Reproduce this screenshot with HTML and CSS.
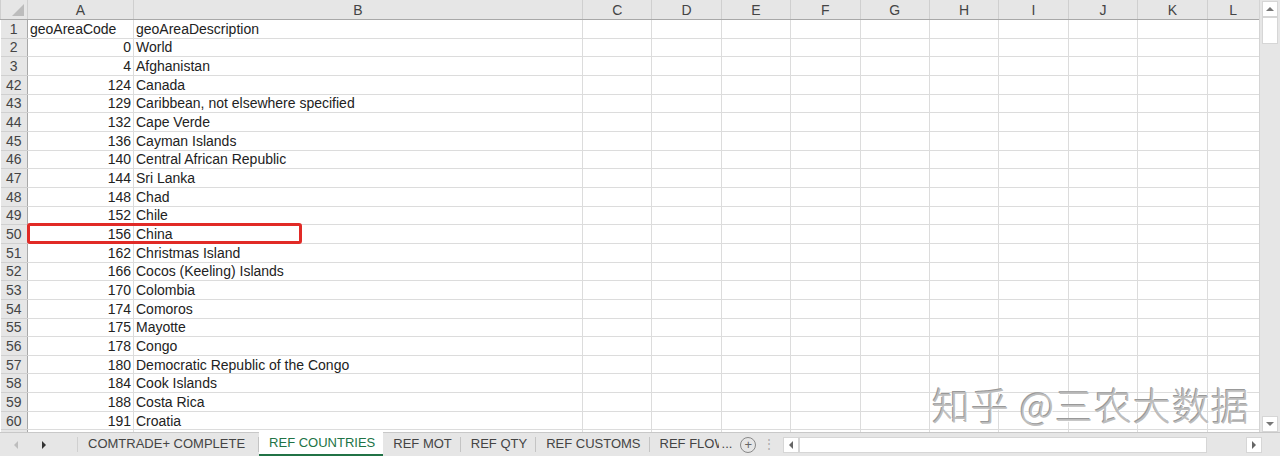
FILE: index.html
```html
<!DOCTYPE html>
<html lang="en">
<head>
    <meta charset="UTF-8">
    <title>REF COUNTRIES</title>
    <link rel="stylesheet" href="styles.css">
</head>
<body>
    <div class="window">
        <!-- Sheet area + vertical scrollbar -->
        <div class="workarea">
            <div class="grid-wrap">
                <table class="sheet">
                    <colgroup>
                        <col class="c-row"><col class="c-a"><col class="c-b">
                        <col class="c-n"><col class="c-n"><col class="c-n"><col class="c-n"><col class="c-n">
                        <col class="c-n"><col class="c-n"><col class="c-n"><col class="c-n"><col class="c-l">
                    </colgroup>
                    <thead>
                        <tr>
                            <th class="corner"><span class="corner-tri"></span></th>
                            <th>A</th><th>B</th><th>C</th><th>D</th><th>E</th><th>F</th>
                            <th>G</th><th>H</th><th>I</th><th>J</th><th>K</th><th>L</th>
                        </tr>
                    </thead>
                    <tbody>
                        <tr><th>1</th><td>geoAreaCode</td><td class="desc">geoAreaDescription</td><td></td><td></td><td></td><td></td><td></td><td></td><td></td><td></td><td></td><td></td></tr>
                        <tr><th>2</th><td class="num">0</td><td class="desc">World</td><td></td><td></td><td></td><td></td><td></td><td></td><td></td><td></td><td></td><td></td></tr>
                        <tr><th>3</th><td class="num">4</td><td class="desc">Afghanistan</td><td></td><td></td><td></td><td></td><td></td><td></td><td></td><td></td><td></td><td></td></tr>
                        <tr><th>42</th><td class="num">124</td><td class="desc">Canada</td><td></td><td></td><td></td><td></td><td></td><td></td><td></td><td></td><td></td><td></td></tr>
                        <tr><th>43</th><td class="num">129</td><td class="desc">Caribbean, not elsewhere specified</td><td></td><td></td><td></td><td></td><td></td><td></td><td></td><td></td><td></td><td></td></tr>
                        <tr><th>44</th><td class="num">132</td><td class="desc">Cape Verde</td><td></td><td></td><td></td><td></td><td></td><td></td><td></td><td></td><td></td><td></td></tr>
                        <tr><th>45</th><td class="num">136</td><td class="desc">Cayman Islands</td><td></td><td></td><td></td><td></td><td></td><td></td><td></td><td></td><td></td><td></td></tr>
                        <tr><th>46</th><td class="num">140</td><td class="desc">Central African Republic</td><td></td><td></td><td></td><td></td><td></td><td></td><td></td><td></td><td></td><td></td></tr>
                        <tr><th>47</th><td class="num">144</td><td class="desc">Sri Lanka</td><td></td><td></td><td></td><td></td><td></td><td></td><td></td><td></td><td></td><td></td></tr>
                        <tr><th>48</th><td class="num">148</td><td class="desc">Chad</td><td></td><td></td><td></td><td></td><td></td><td></td><td></td><td></td><td></td><td></td></tr>
                        <tr><th>49</th><td class="num">152</td><td class="desc">Chile</td><td></td><td></td><td></td><td></td><td></td><td></td><td></td><td></td><td></td><td></td></tr>
                        <tr><th>50</th><td class="num">156</td><td class="desc">China</td><td></td><td></td><td></td><td></td><td></td><td></td><td></td><td></td><td></td><td></td></tr>
                        <tr><th>51</th><td class="num">162</td><td class="desc">Christmas Island</td><td></td><td></td><td></td><td></td><td></td><td></td><td></td><td></td><td></td><td></td></tr>
                        <tr><th>52</th><td class="num">166</td><td class="desc">Cocos (Keeling) Islands</td><td></td><td></td><td></td><td></td><td></td><td></td><td></td><td></td><td></td><td></td></tr>
                        <tr><th>53</th><td class="num">170</td><td class="desc">Colombia</td><td></td><td></td><td></td><td></td><td></td><td></td><td></td><td></td><td></td><td></td></tr>
                        <tr><th>54</th><td class="num">174</td><td class="desc">Comoros</td><td></td><td></td><td></td><td></td><td></td><td></td><td></td><td></td><td></td><td></td></tr>
                        <tr><th>55</th><td class="num">175</td><td class="desc">Mayotte</td><td></td><td></td><td></td><td></td><td></td><td></td><td></td><td></td><td></td><td></td></tr>
                        <tr><th>56</th><td class="num">178</td><td class="desc">Congo</td><td></td><td></td><td></td><td></td><td></td><td></td><td></td><td></td><td></td><td></td></tr>
                        <tr><th>57</th><td class="num">180</td><td class="desc">Democratic Republic of the Congo</td><td></td><td></td><td></td><td></td><td></td><td></td><td></td><td></td><td></td><td></td></tr>
                        <tr><th>58</th><td class="num">184</td><td class="desc">Cook Islands</td><td></td><td></td><td></td><td></td><td></td><td></td><td></td><td></td><td></td><td></td></tr>
                        <tr><th>59</th><td class="num">188</td><td class="desc">Costa Rica</td><td></td><td></td><td></td><td></td><td></td><td></td><td></td><td></td><td></td><td></td></tr>
                        <tr><th>60</th><td class="num">191</td><td class="desc">Croatia</td><td></td><td></td><td></td><td></td><td></td><td></td><td></td><td></td><td></td><td></td></tr>
                        <tr class="cut"><th></th><td></td><td></td><td></td><td></td><td></td><td></td><td></td><td></td><td></td><td></td><td></td><td></td></tr>
                    </tbody>
                </table>

                <!-- overlays -->
                <div class="highlight"></div>
                <div class="watermark">知乎 @三农大数据</div>
            </div>

            <div class="vscroll">
                <div class="sb-btn"><span class="tri-up"></span></div>
                <div class="vthumb"></div>
                <div class="vtrack"></div>
                <div class="sb-btn"><span class="tri-down"></span></div>
            </div>
        </div>

        <!-- Sheet tabs -->
        <div class="tabbar">
            <div class="tab-nav">
                <span class="tri-left"></span>
                <span class="tri-right"></span>
            </div>
            <div class="tabs">
                <div class="tab">COMTRADE+ COMPLETE</div>
                <div class="tab active">REF COUNTRIES</div>
                <div class="tab">REF MOT</div>
                <div class="tab">REF QTY</div>
                <div class="tab">REF CUSTOMS</div>
                <div class="tab last"><span class="clip">REF FLOW</span><span class="dots">...</span></div>
            </div>
            <div class="add-sheet">+</div>
            <div class="splitter">&#8942;</div>
            <div class="hscroll">
                <div class="sb-btn"><span class="tri-left small"></span></div>
                <div class="hthumb"></div>
                <div class="htrack"></div>
                <div class="sb-btn"><span class="tri-right small"></span></div>
            </div>
        </div>
    </div>
</body>
</html>
```

FILE: styles.css
```css
/* General */
body {
    margin: 0;
    font-family: "Liberation Sans", "Noto Sans CJK SC", sans-serif;
    color: #222;
    background-color: #ffffff;
}

.window {
    width: 1280px;
    height: 456px;
    display: flex;
    flex-direction: column;
    overflow: hidden;
}

/* Work area */
.workarea {
    display: flex;
    height: 432px;
    flex-shrink: 0;
}

.grid-wrap {
    position: relative;
    width: 1259px;
    overflow: hidden;
}

/* Sheet table */
.sheet {
    border-collapse: collapse;
    table-layout: fixed;
    width: 1259px;
    font-size: 14px;
}

.c-row { width: 27px; }
.c-a { width: 106px; }
.c-b { width: 449px; }
.c-n { width: 69.4px; }
.c-l { width: 52.4px; }

.sheet th,
.sheet td {
    padding: 0;
    height: 17.67px;
    line-height: 16px;
    white-space: nowrap;
    overflow: hidden;
    border: 1px solid #dcdcdc;
}

.sheet thead th {
    height: 19px;
    background-color: #e6e6e6;
    color: #444;
    font-weight: normal;
    border-left: 1px solid #cfcfcf;
    border-right: 1px solid #cfcfcf;
    border-top: none;
    border-bottom: 1px solid #a8a8a8;
}

.sheet tbody th {
    background-color: #e6e6e6;
    color: #444;
    font-weight: normal;
    text-align: center;
    border-left: none;
    border-right: 1px solid #a8a8a8;
    border-top: 1px solid #d0d0d0;
    border-bottom: 1px solid #d0d0d0;
}

.sheet td {
    padding-left: 2px;
}

.sheet td.num {
    text-align: right;
    padding-right: 2px;
    padding-left: 0;
}

.corner {
    position: relative;
}

.corner-tri {
    position: absolute;
    right: 3px;
    bottom: 3px;
    width: 0;
    height: 0;
    border-left: 12px solid transparent;
    border-bottom: 12px solid #bcbcbc;
}

/* Red box around row 50 */
.highlight {
    position: absolute;
    left: 27px;
    top: 223px;
    width: 269px;
    height: 15px;
    border: 3px solid #e12a26;
    border-radius: 3px;
}

/* Watermark */
.watermark {
    position: absolute;
    left: 932px;
    top: 380px;
    font-family: "Noto Sans CJK SC", sans-serif;
    font-size: 38px;
    font-weight: 300;
    line-height: 48px;
    color: #bdbdbd;
    letter-spacing: 1px;
    text-shadow: 1px 1px 0 #ffffff, -1px -1px 0 #999999;
}

/* Vertical scrollbar */
.vscroll {
    width: 21px;
    display: flex;
    flex-direction: column;
    align-items: center;
    background-color: #e6e6e6;
    border-left: 1px solid #d4d4d4;
    box-sizing: border-box;
    padding-top: 1px;
}

.sb-btn {
    width: 16px;
    height: 16px;
    background-color: #fff;
    border: 1px solid #d6d6d6;
    box-sizing: border-box;
    display: flex;
    align-items: center;
    justify-content: center;
    flex-shrink: 0;
}

.vthumb {
    width: 16px;
    height: 27px;
    background-color: #fff;
    border: 1px solid #d6d6d6;
    box-sizing: border-box;
}

.vtrack {
    flex: 1;
}

.tri-up {
    border-left: 4px solid transparent;
    border-right: 4px solid transparent;
    border-bottom: 4px solid #777;
}

.tri-down {
    border-left: 4px solid transparent;
    border-right: 4px solid transparent;
    border-top: 4px solid #777;
}

.tri-left {
    border-top: 4px solid transparent;
    border-bottom: 4px solid transparent;
    border-right: 4px solid #bdbdbd;
}

.tri-right {
    border-top: 4px solid transparent;
    border-bottom: 4px solid transparent;
    border-left: 4px solid #333;
}

.tri-left.small { border-right-color: #666; }
.tri-right.small { border-left-color: #666; }

/* Tab bar */
.tabbar {
    height: 24px;
    display: flex;
    align-items: stretch;
    background-color: #e6e6e6;
    border-top: 1px solid #c8c8c8;
    box-sizing: border-box;
    font-size: 13px;
    color: #444;
    white-space: nowrap;
}

.tab-nav {
    width: 78px;
    flex-shrink: 0;
    display: flex;
    align-items: center;
    gap: 24px;
    padding-left: 14px;
    box-sizing: border-box;
    border-right: 1px solid #d0d0d0;
    margin: 4px 0;
}

.tabs {
    display: flex;
    flex-shrink: 0;
}

.tab {
    padding: 0 9px 0 10px;
    line-height: 21px;
    position: relative;
}

.tab:first-child {
    padding-right: 14px;
}

.tab::after {
    content: "";
    position: absolute;
    right: 0;
    top: 4px;
    bottom: 4px;
    border-right: 1px solid #c4c4c4;
}

.tab.last::after,
.tab.active::after {
    display: none;
}

.tab.active {
    background-color: #ffffff;
    color: #217346;
    border-bottom: 2px solid #217346;
    margin-top: -1px;
    line-height: 22px;
    padding: 0 8px 0 10px;
}

.tab .clip {
    display: inline-block;
    max-width: 59px;
    overflow: hidden;
    vertical-align: top;
}

.tab .dots {
    margin-left: 3px;
}

.tab.last {
    padding-right: 3px;
}

.add-sheet {
    width: 14px;
    height: 14px;
    flex-shrink: 0;
    margin: 4px 7px 0 5px;
    border: 1px solid #888;
    border-radius: 50%;
    font-size: 13px;
    line-height: 13px;
    text-align: center;
    color: #666;
}

.splitter {
    color: #aaa;
    line-height: 22px;
    margin-right: 5px;
    font-size: 12px;
}

.hscroll {
    flex: 1;
    display: flex;
    align-items: center;
    padding: 0 18px 0 3px;
}

.hthumb {
    width: 408px;
    height: 16px;
    background-color: #fff;
    border: 1px solid #d6d6d6;
    box-sizing: border-box;
}

.htrack {
    flex: 1;
}
```
